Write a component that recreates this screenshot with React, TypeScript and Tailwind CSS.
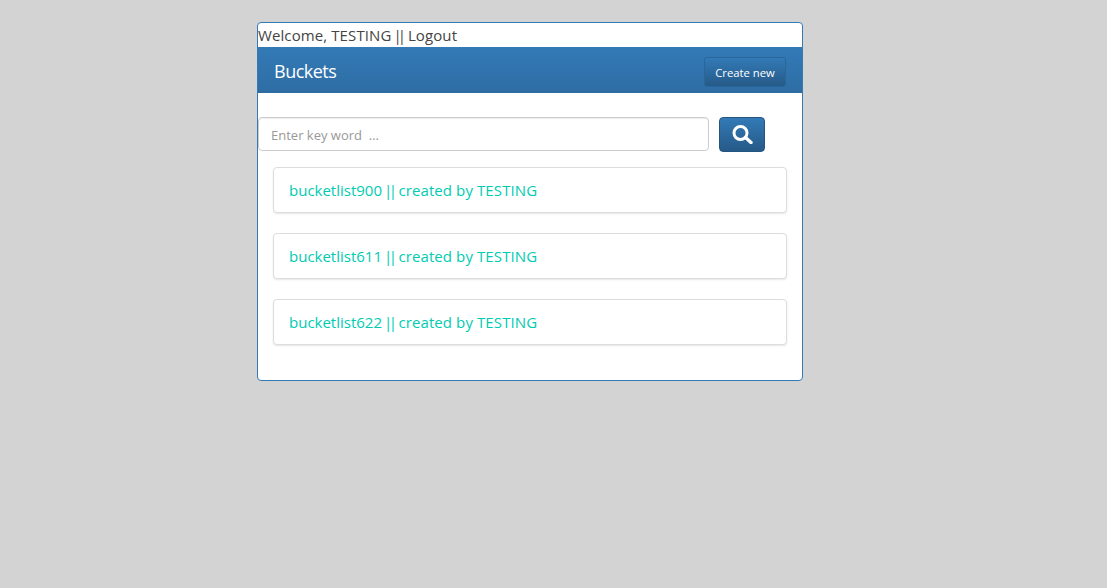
export default function App() {
  const buckets = ["bucketlist900", "bucketlist611", "bucketlist622"]

  return (
    <div className="min-h-screen bg-[#d3d3d3] font-['Open_Sans',sans-serif] pt-[22px]">
      <div className="ml-[257px] w-[546px] h-[359px] bg-white border border-[#337ab7] rounded-[4px] overflow-hidden">
        <div className="h-6 text-[15px] leading-6 text-[#444] tracking-[0.1px] whitespace-pre">
          Welcome, TESTING <span className="-ml-[2px] mr-[2px] tracking-[-4px]">||</span> Logout
        </div>

        <div className="h-[46px] px-4 pt-[10px] flex items-start justify-between bg-gradient-to-b from-[#337ab7] to-[#2e6da4] border-b border-[#2e6da4]">
          <h3 className="text-[18px] leading-[28px] text-white tracking-[-0.5px]">Buckets</h3>
          <button className="h-[30px] w-[82px] pt-[2px] text-[11.25px] text-white rounded-[3px] border border-[#2b669a] bg-gradient-to-b from-[#337ab7] to-[#265a88]">
            Create new
          </button>
        </div>

        <div className="mt-6 flex items-start">
          <input
            className="w-[451px] h-[34px] px-3 pt-[2px] text-[13px] rounded-[4px] border border-[#ccc] shadow-[inset_0_1px_1px_rgba(0,0,0,0.075)] placeholder:text-[#999]"
            placeholder="Enter key word  ..."
          />
          <button className="ml-[10px] w-[46px] h-[35px] flex items-center justify-center rounded-[4px] border border-[#245580] bg-gradient-to-b from-[#337ab7] to-[#265a88]">
            <svg className="w-[21px] h-[19px]" viewBox="0 0 21 19" fill="none" stroke="white">
              <circle cx="8.5" cy="8" r="6.5" strokeWidth="3" />
              <path d="M13.5 12.5 L19 17.5" strokeWidth="3.4" strokeLinecap="round" />
            </svg>
          </button>
        </div>

        <div className="mt-[15px] px-[15px] flex flex-col gap-5">
          {buckets.map((name) => (
            <div
              key={name}
              className="h-[46px] px-[15px] flex items-center bg-white border border-[#ddd] rounded-[4px] shadow-[0_1px_2px_rgba(0,0,0,0.1)] text-[15px] text-[#00ccb1] whitespace-pre"
            >
              {name} <span className="-ml-[2px] mr-[1px] tracking-[-3.5px]">||</span>
              <span className="tracking-[0.1px]"> created by TESTING</span>
            </div>
          ))}
        </div>
      </div>
    </div>
  )
}
